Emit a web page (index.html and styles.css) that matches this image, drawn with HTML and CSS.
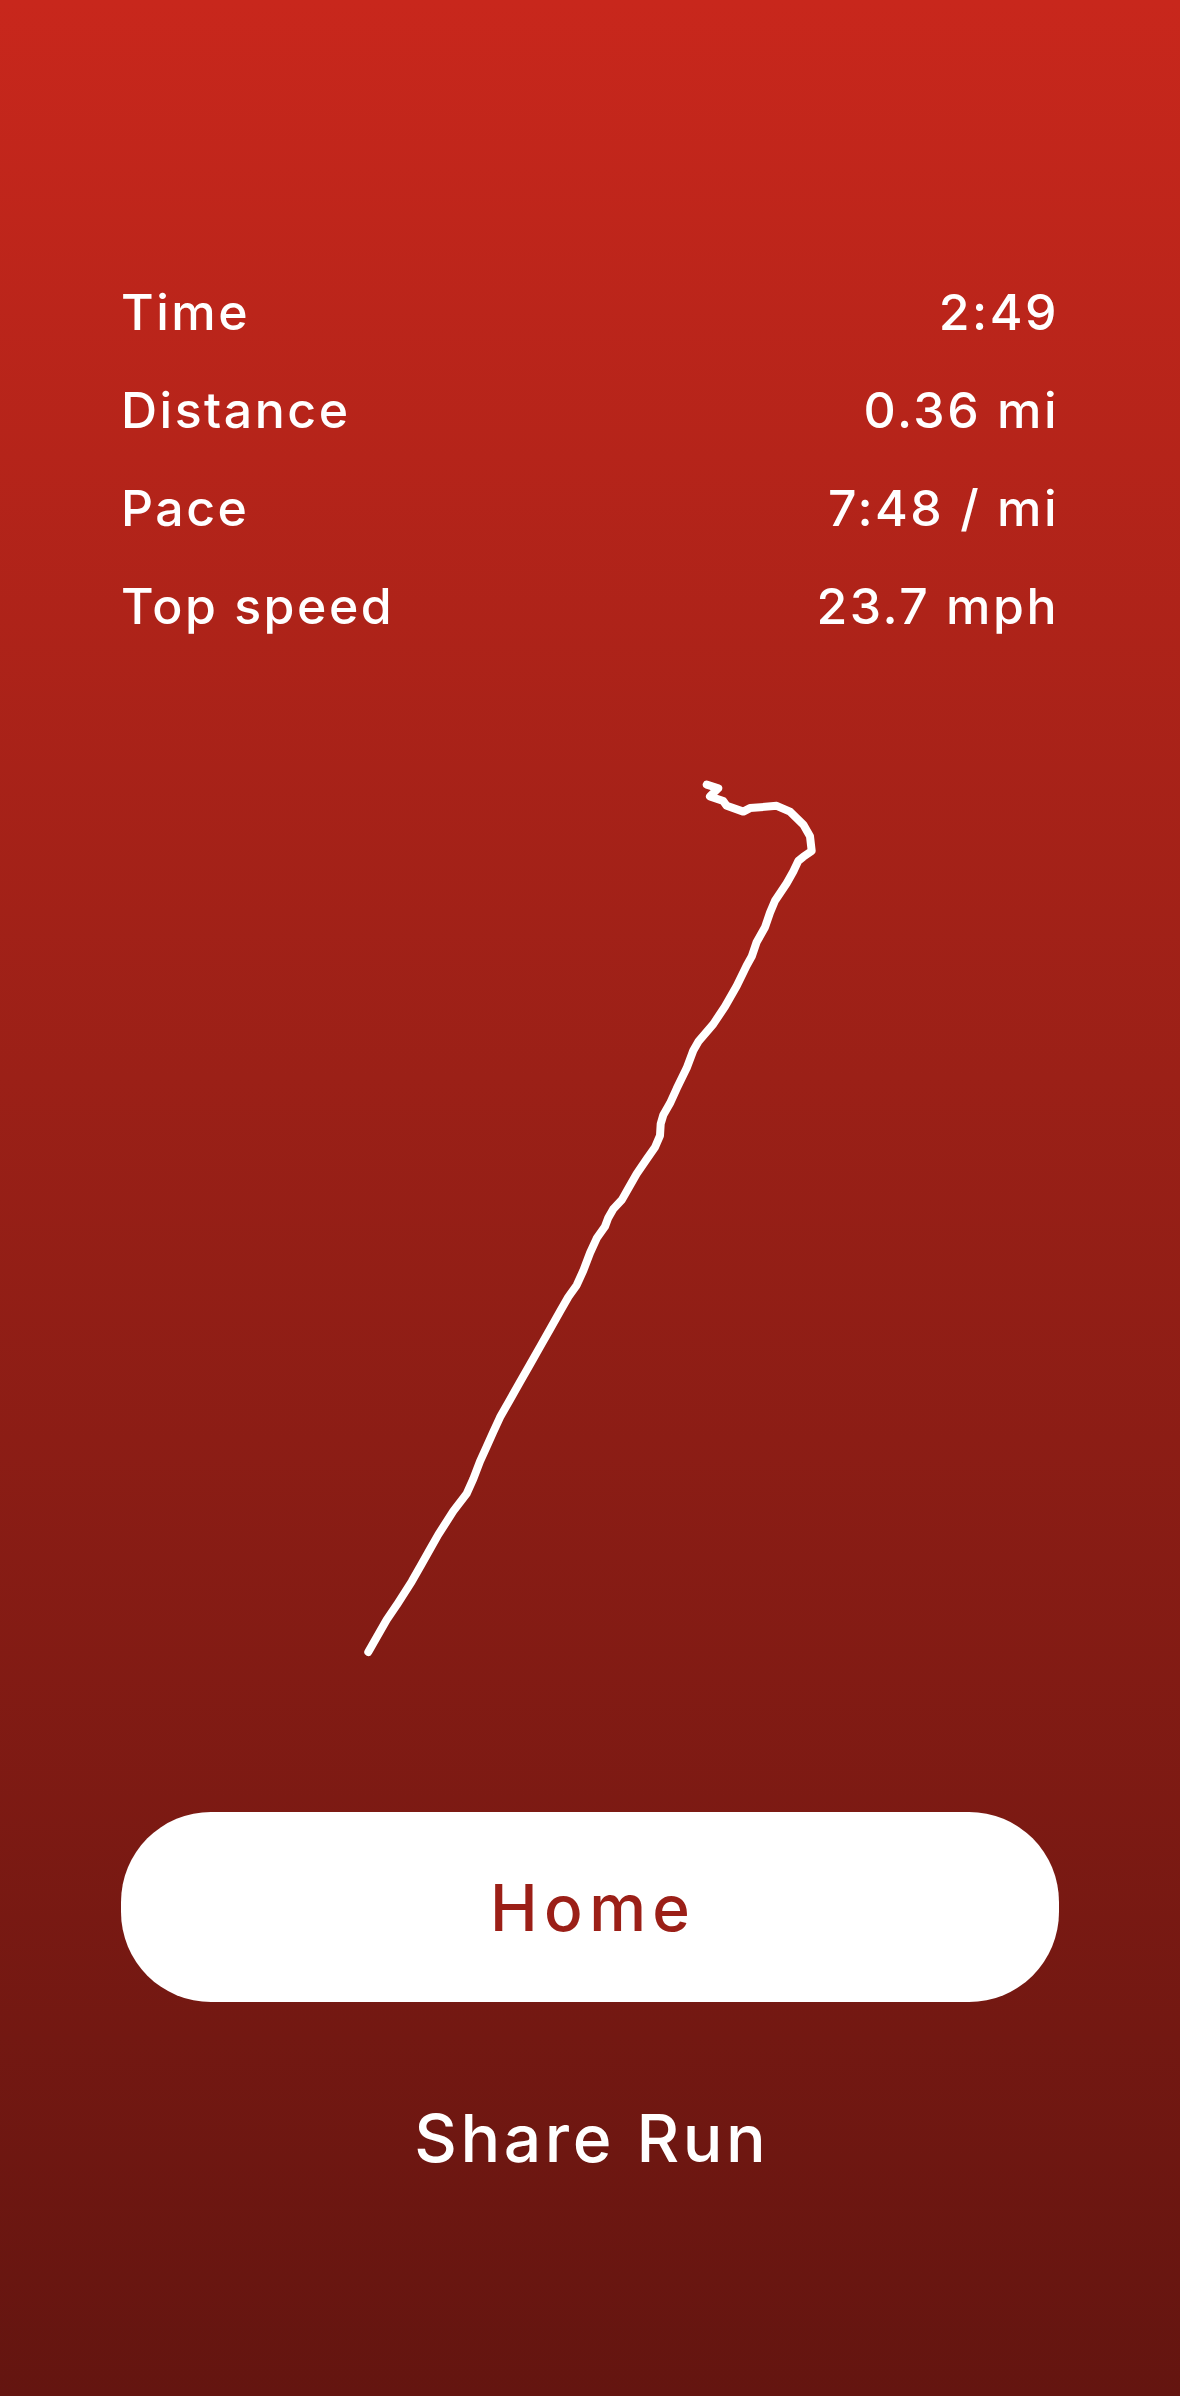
FILE: index.html
```html
<!DOCTYPE html>
<html lang="en">

<head>
    <meta charset="UTF-8">
    <meta name="viewport" content="width=device-width, initial-scale=1.0">
    <title>Run Summary</title>
    <link rel="stylesheet" href="styles.css">
</head>

<body>
    <div class="container">
        <div class="stats">
            <div class="row"><span>Time</span><span>2:49</span></div>
            <div class="row"><span>Distance</span><span>0.36 mi</span></div>
            <div class="row"><span>Pace</span><span>7:48 / mi</span></div>
            <div class="row"><span>Top speed</span><span>23.7 mph</span></div>
        </div>

        <svg class="route" viewBox="121 0 938 920" xmlns="http://www.w3.org/2000/svg">
            <polyline fill="none" stroke="#fff" stroke-width="8" stroke-linecap="round" stroke-linejoin="round"
                points="706.7,24.6 718.3,28.2 710,36.4 723.3,41.1 726.7,45.8 743.3,51.6 750,48.1 776.7,45.8 790,51.6 803.3,64.6 810,76.3 811.7,91 803.3,96.8 798.3,100.9 793.3,111.5 786.7,123.2 775,140.8 770,152.6 765,167.3 756.7,181.9 751.7,196.6 746.7,205.4 736.7,225.9 725,246.5 713.3,264.1 698.3,281.7 693.3,290.5 686.7,308.1 676.7,328.6 670,343.3 663.3,355 660.7,363.8 660,375.6 655,387.3 646.7,399.1 636.7,413.7 628.3,428.4 621.7,440.1 613.3,448.9 608.3,457.7 605,466.5 596.7,478.3 590,493 583.3,510.6 576.7,525.2 568.3,537 560,551.6 550,569.2 541.7,583.9 530,604.5 520,622 510,639.7 500,657.3 493.3,671.9 486.7,686.6 480,701.3 473.3,718.9 466.7,733.6 453.3,751.2 438.3,774.6 430,789.3 421.7,804 411.7,821.6 396.7,845.1 386.7,859.7 376.7,877.3 368.3,892" />
        </svg>

        <button class="home" type="button">Home</button>
        <button class="share" type="button">Share Run</button>
    </div>
</body>

</html>
```

FILE: styles.css
```css
* {
    margin: 0;
    padding: 0;
    box-sizing: border-box;
    font-family: Inter, "Noto Sans", sans-serif;
}

body {
    min-height: 2396px;
    background: linear-gradient(180deg, #c8271c 0%, #9b2017 45%, #641510 100%);
    color: #fff;
}

.container {
    padding: 263px 121px 0;
}

.stats .row {
    display: flex;
    justify-content: space-between;
    align-items: center;
    height: 98px;
    font-size: 50px;
    font-weight: 500;
    letter-spacing: 0.05em;
}

.route {
    display: block;
    width: 938px;
    height: 920px;
    margin-top: 105px;
}

button {
    display: block;
    width: 100%;
    border: 0;
    background: none;
    cursor: pointer;
}

.home {
    height: 190px;
    margin-top: 132px;
    background-color: #fff;
    border-radius: 90px;
    color: #9b1f17;
    font-size: 64px;
    font-weight: 500;
    letter-spacing: 0.1em;
    text-indent: 0.1em;
}

.share {
    height: 80px;
    margin-top: 96px;
    color: #fff;
    font-size: 66px;
    font-weight: 500;
    letter-spacing: 0.055em;
    text-indent: 0.055em;
}
```
